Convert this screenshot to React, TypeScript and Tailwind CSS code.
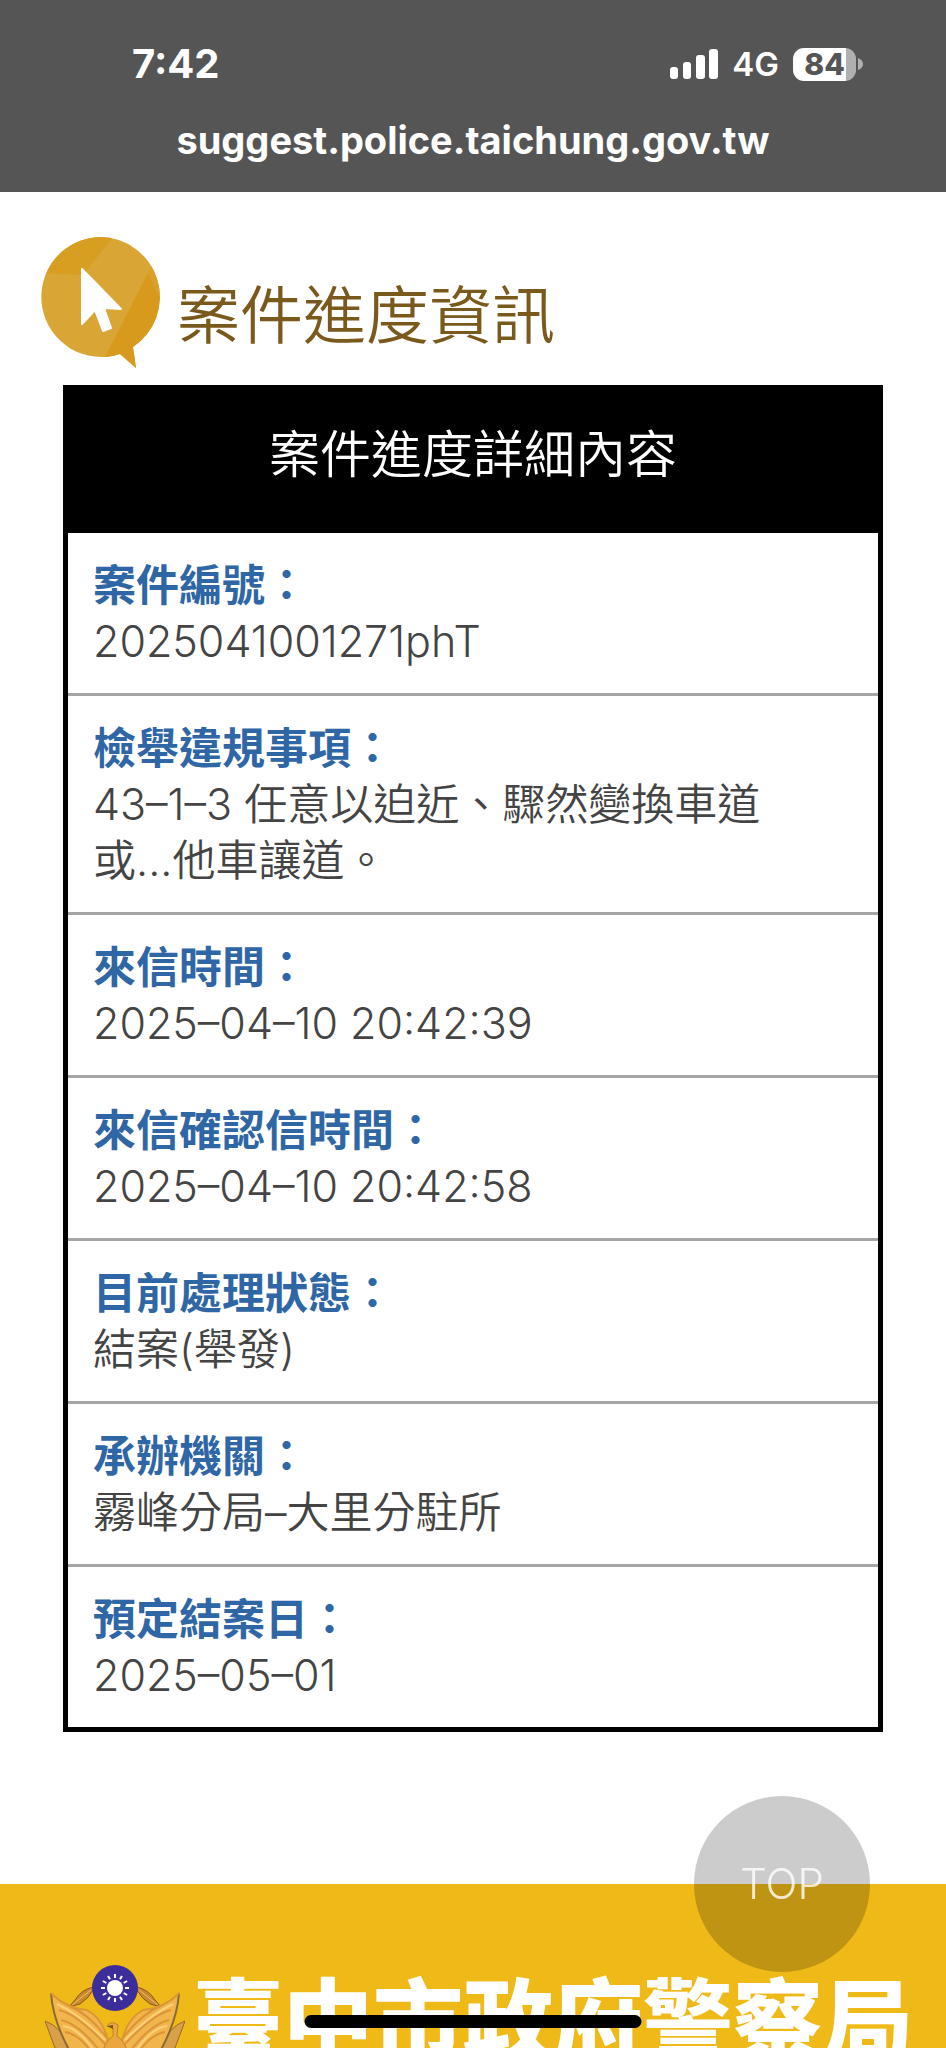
const cases = [
  { label: '案件編號', value: '2025041001271phT' },
  { label: '檢舉違規事項', value: '43–1–3 任意以迫近、驟然變換車道或...他車讓道。' },
  { label: '來信時間', value: '2025–04–10 20:42:39' },
  { label: '來信確認信時間', value: '2025–04–10 20:42:58' },
  { label: '目前處理狀態', value: '結案(舉發)' },
  { label: '承辦機關', value: '霧峰分局–大里分駐所' },
  { label: '預定結案日', value: '2025–05–01' },
];

function StatusBar() {
  return (
    <header className="bg-[#555555] text-white h-48 shrink-0">
      <div className="flex items-center justify-between pl-[132px] pr-[83px] pt-10">
        <span className="text-[40px] leading-12 font-bold">7:42</span>
        <div className="flex items-center gap-[14px]">
          <svg className="w-12 h-[30px]" viewBox="0 0 48 30" fill="currentColor">
            <rect x="0" y="18" width="8" height="12" rx="3" />
            <rect x="13" y="13" width="8" height="17" rx="3" />
            <rect x="26" y="6" width="9" height="24" rx="3" />
            <rect x="39" y="0" width="9" height="30" rx="3" />
          </svg>
          <span className="text-[33px] leading-12 font-semibold">4G</span>
          <div className="flex items-center gap-[2px]">
            <div className="flex justify-center items-center w-[63px] h-[33px] rounded-[11px] bg-linear-to-r from-white from-84% to-[#b0b0b0] to-84% text-[#555555] text-[30px] leading-8 font-extrabold">
              84
            </div>
            <svg className="w-[5px] h-3" viewBox="0 0 5 12">
              <path d="M0 0Q5 2 5 6T0 12Z" fill="#b0b0b0" />
            </svg>
          </div>
        </div>
      </div>
      <p className="text-center text-[38px] leading-12 font-bold pt-7">suggest.police.taichung.gov.tw</p>
    </header>
  );
}

function BubbleIcon() {
  return (
    <svg className="w-[122px] h-[132px] shrink-0" viewBox="0 0 122 132">
      <defs>
        <clipPath id="bubble">
          <path d="M61 0A60 60 0 0 1 94 110L97 131L81 117A60 60 0 1 1 61 0Z" />
        </clipPath>
      </defs>
      <g clipPath="url(#bubble)">
        <path d="M0 0H122V132H0Z" fill="#d9a535" />
        <path d="M0 36L30 0H74L44 38Z" fill="#d89e22" />
        <path d="M109 36L122 50V132H60L67 118Z" fill="#d79a1c" />
        <path d="M109 36L122 64V0Z" fill="#d9a02a" />
      </g>
      <path d="M43 32V87L56 73L64 94L72 91L65 71L82 72Z" fill="#ffffff" stroke="#ffffff" strokeWidth="2" strokeLinejoin="round" />
    </svg>
  );
}

function PoliceEmblem() {
  const rays = Array.from({ length: 12 }, (_, i) => i * 30);
  return (
    <svg className="w-[140px] h-[140px] shrink-0" viewBox="0 0 140 140">
      {/* olive branches */}
      <path d="M48 23Q36 26 30 36L24 43L35 40Q44 34 48 26ZM92 23Q104 26 110 36L116 43L105 40Q96 34 92 26Z" fill="#c98a2e" stroke="#8a5520" strokeWidth="1" />
      <path d="M46 26L27 41M94 26L113 41" stroke="#f0c060" strokeWidth="1" />
      {/* outer feathers */}
      <path d="M0 57Q16 62 28 88L10 84ZM140 57Q124 62 112 88L130 84Z" fill="#d9a04a" stroke="#9a6a2a" strokeWidth="1" />
      {/* wings */}
      <path d="M6 29Q8 60 30 96L66 110L64 82Q60 56 42 46Q20 44 6 29Z" fill="#f2b54c" />
      <path d="M134 29Q132 60 110 96L74 110L76 82Q80 56 98 46Q120 44 134 29Z" fill="#f2b54c" />
      <path d="M6 29Q8 60 30 96M134 29Q132 60 110 96" fill="none" stroke="#8a6a35" strokeWidth="2" />
      <path d="M6 29Q20 44 42 46Q60 56 64 82M134 29Q120 44 98 46Q80 56 76 82" fill="none" stroke="#dc9636" strokeWidth="2" />
      <g fill="none" stroke="#dc9438" strokeWidth="2">
        <path d="M14 46Q32 50 60 80M16 56Q34 60 54 86M20 68Q34 70 48 90M24 42Q44 50 62 74" />
        <path d="M126 46Q108 50 80 80M124 56Q106 60 86 86M120 68Q106 70 92 90M116 42Q96 50 78 74" />
      </g>
      <g fill="none" stroke="#fbd27a" strokeWidth="2">
        <path d="M12 40Q34 50 60 76M18 62Q34 64 50 88" />
        <path d="M128 40Q106 50 80 76M122 62Q106 64 90 88" />
      </g>
      {/* head and body */}
      <path d="M62 62Q66 56 73 61L72 72Q82 78 84 96V120H56V96Q58 78 68 72L68 64Z" fill="#eba640" stroke="#c4812e" strokeWidth="1" />
      <path d="M62 62L68 61V65Z" fill="#6e5a20" />
      <circle cx="70" cy="24" r="23" fill="#3c2d9b" />
      <g stroke="#ffffff" strokeWidth="2">
        {rays.map(angle => (
          <path key={angle} d="M70 14V10" transform={`rotate(${angle} 70 24)`} />
        ))}
      </g>
      <circle cx="70" cy="24" r="8" fill="#ffffff" />
    </svg>
  );
}

export default function App() {
  return (
    <div
      lang="zh-Hant"
      className="h-screen flex flex-col overflow-hidden bg-white font-['Inter','Noto_Sans_CJK_TC',sans-serif]"
    >
      <StatusBar />

      <main className="shrink-0 pt-[45px]">
        <div className="flex items-center gap-4 pl-[39px] h-[132px]">
          <BubbleIcon />
          <h1 className="text-[63px] leading-20 font-[350] text-[#7a591c] pt-6">案件進度資訊</h1>
        </div>

        <table className="w-[calc(100%-126px)] mx-auto mt-4 border-5 border-t-0 border-black border-separate border-spacing-0">
          <thead>
            <tr>
              <th className="h-[148px] pb-2 bg-black text-white text-center text-[51px] leading-16 font-[350]">
                案件進度詳細內容
              </th>
            </tr>
          </thead>
          <tbody className="[&>tr:last-child>td]:border-b-0">
            {cases.map(item => (
              <tr key={item.label}>
                <td className="pl-[25px] pr-15 py-6 border-b-3 border-[#a6a6a6] text-[43px] leading-14 font-[350] text-[#444444]">
                  <strong className="block font-bold text-[#2f66a5]">{item.label}：</strong>
                  {item.value}
                </td>
              </tr>
            ))}
          </tbody>
        </table>
      </main>

      <footer className="flex-1 min-h-0 mt-[152px] bg-[#efb917] overflow-hidden">
        <div className="flex items-start gap-2 pl-[45px] pt-20">
          <PoliceEmblem />
          <p className="text-[90px] leading-[116px] font-black text-white whitespace-nowrap">臺中市政府警察局</p>
        </div>
      </footer>

      <button
        type="button"
        onClick={() => window.scrollTo({ top: 0, behavior: 'smooth' })}
        className="fixed right-[76px] bottom-[76px] size-44 rounded-full bg-black/20 text-white/80 text-[42px] leading-12 font-light"
      >
        TOP
      </button>
      <div className="fixed bottom-5 left-1/2 -translate-x-1/2 w-[337px] h-[13px] rounded-full bg-black" />
    </div>
  );
}
